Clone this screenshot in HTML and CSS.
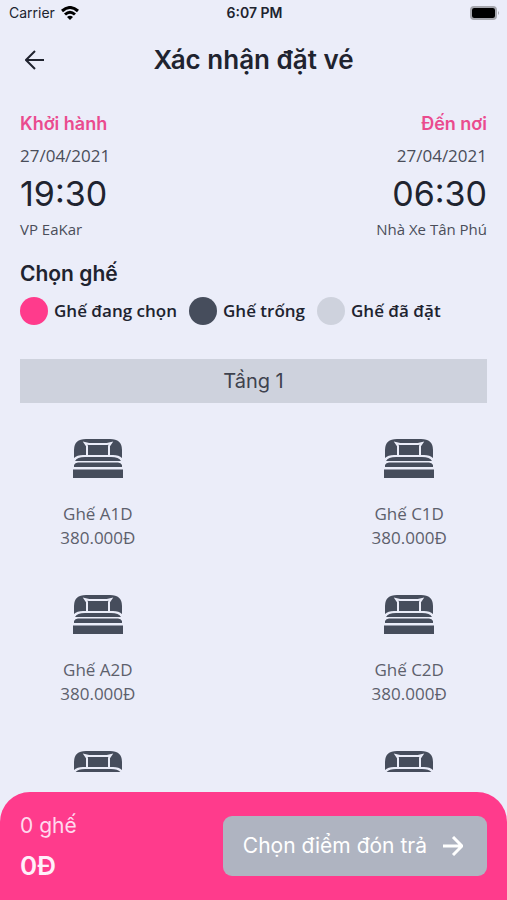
FILE: index.html
```html
<!DOCTYPE html>
<html lang="vi">
<head>
<meta charset="utf-8">
<meta name="viewport" content="width=device-width, initial-scale=1">
<title>Xác nhận đặt vé</title>
<link rel="stylesheet" href="styles.css">
</head>
<body>
<svg class="symbols" aria-hidden="true">
  <symbol id="bed" viewBox="0 0 50 40">
    <path d="M1 20V12Q1 1 13 1H37Q49 1 49 12V20Q46 17 40 17H10Q4 17 1 20Z"/>
    <path class="bed-line" d="M14 18V8L12 5L16 6H34L38 5L36 8V18"/>
    <path d="M2 23Q4 19 12 19H38Q46 19 48 23Z"/>
    <path d="M1 29V27Q2 24.500 5 24.500H45Q48 24.500 49 27V29ZM0 31.500H50V40H0Z"/>
  </symbol>
</svg>
<div class="app">
  <div class="status">
    <div class="carrier">
      <span>Carrier</span>
      <svg class="wifi" viewBox="0 0 18 14" aria-hidden="true"><path d="M1 5Q9-2 17 5M4 8.500Q9 4 14 8.500"/><path class="wifi-dot" d="M6 11Q9 8.500 12 11L9 14Z"/></svg>
    </div>
    <span class="clock">6:07 PM</span>
    <svg class="battery" viewBox="0 0 30 14" aria-hidden="true"><rect class="shell" x="1" y="1" width="25" height="12" rx="3"/><rect x="2" y="2" width="23" height="10" rx="2"/><path class="cap" d="M28 5Q30 7 28 9Z"/></svg>
  </div>
  <header class="header">
    <button class="back" type="button" aria-label="Quay lại"><svg viewBox="0 0 20 20" aria-hidden="true"><path d="M19 10H1M10 1L1 10L10 19"/></svg></button>
    <h1>Xác nhận đặt vé</h1>
  </header>
  <main class="content">
    <section class="trip">
      <div class="stop">
        <h2>Khởi hành</h2>
        <p class="date">27/04/2021</p>
        <p class="time">19:30</p>
        <p class="place">VP EaKar</p>
      </div>
      <div class="stop arrival">
        <h2>Đến nơi</h2>
        <p class="date">27/04/2021</p>
        <p class="time">06:30</p>
        <p class="place">Nhà Xe Tân Phú</p>
      </div>
    </section>
    <h2 class="choose">Chọn ghế</h2>
    <ul class="legend">
      <li><span class="dot selected"></span>Ghế đang chọn</li>
      <li><span class="dot free"></span>Ghế trống</li>
      <li><span class="dot taken"></span>Ghế đã đặt</li>
    </ul>
    <h3 class="floor">Tầng 1</h3>
    <div class="seats">
      <button class="seat" type="button"><svg class="bed"><use href="#bed"/></svg><span>Ghế A1D</span><span>380.000Đ</span></button>
      <button class="seat right" type="button"><svg class="bed"><use href="#bed"/></svg><span>Ghế C1D</span><span>380.000Đ</span></button>
      <button class="seat" type="button"><svg class="bed"><use href="#bed"/></svg><span>Ghế A2D</span><span>380.000Đ</span></button>
      <button class="seat right" type="button"><svg class="bed"><use href="#bed"/></svg><span>Ghế C2D</span><span>380.000Đ</span></button>
      <button class="seat" type="button" aria-label="Ghế"><svg class="bed"><use href="#bed"/></svg></button>
      <button class="seat right" type="button" aria-label="Ghế"><svg class="bed"><use href="#bed"/></svg></button>
    </div>
  </main>
  <footer class="summary">
    <div class="total">
      <span class="count">0 ghế</span>
      <strong>0Đ</strong>
    </div>
    <button class="next" type="button">Chọn điểm đón trả<svg viewBox="0 0 20 20" aria-hidden="true"><path d="M0 10H18M10 1L19 10L10 19"/></svg></button>
  </footer>
</div>
</body>
</html>
```
FILE: styles.css
```css
* {
  box-sizing: border-box;
}

body,
h1,
h2,
h3,
p,
ul {
  margin: 0;
  padding: 0;
}

body {
  background: #ebedf9;
  color: #20232f;
  font-family: "Open Sans", "Noto Sans", sans-serif;
}

button {
  border: 0;
  padding: 0;
  background: none;
  color: inherit;
  font: inherit;
  cursor: pointer;
}

.symbols {
  position: absolute;
  width: 0;
  height: 0;
}

.app {
  display: flex;
  flex-direction: column;
  height: 100vh;
}

.status {
  display: grid;
  grid-template-columns: 1fr auto 1fr;
  align-items: center;
  height: 26px;
  padding: 0 7px 0 9px;
  font: 14px/20px Inter, sans-serif;
}

.carrier {
  display: flex;
  align-items: center;
  gap: 6px;
}

.wifi {
  width: 18px;
  height: 14px;
  fill: none;
  stroke: #000;
  stroke-width: 3;
}

.wifi-dot {
  fill: #000;
  stroke: none;
}

.clock {
  font-weight: 600;
}

.battery {
  justify-self: end;
  width: 30px;
  height: 14px;
}

.shell {
  fill: none;
  stroke: #a5a6ad;
  stroke-width: 2;
}

.cap {
  fill: #a5a6ad;
}

.header {
  display: grid;
  grid-template-columns: 30px 1fr 30px;
  align-items: center;
  height: 68px;
  padding: 0 20px;
}

.header h1 {
  font: 600 26px/32px Inter, sans-serif;
  text-align: center;
}

.back {
  display: flex;
  justify-content: center;
}

.header svg,
.next svg {
  width: 20px;
  height: 20px;
  fill: none;
  stroke: currentColor;
  stroke-width: 2;
}

.next svg {
  stroke-width: 3;
}

.content {
  flex: 1;
  min-height: 0;
  display: flex;
  flex-direction: column;
  padding: 18px 20px 0;
  margin-bottom: 20px;
}

.trip {
  display: flex;
  justify-content: space-between;
}

.arrival {
  text-align: right;
}

.stop h2 {
  color: #ea4b8e;
  font: 600 18px/24px Inter, sans-serif;
}

.date {
  margin-top: 8px;
  color: #4a4d59;
  font-size: 17px;
  line-height: 24px;
}

.time {
  margin-top: 4px;
  font: 34px/44px Inter, sans-serif;
}

.place {
  margin-top: 3px;
  color: #4a4d59;
  font-size: 15px;
  line-height: 20px;
}

.choose {
  margin-top: 21px;
  font: 600 21px/28px Inter, sans-serif;
}

.legend {
  display: flex;
  gap: 12px;
  margin-top: 9px;
  list-style: none;
  font-size: 17px;
  font-weight: 600;
  line-height: 28px;
  white-space: nowrap;
}

.legend li {
  display: flex;
  align-items: center;
  gap: 6px;
}

.dot {
  width: 28px;
  height: 28px;
  border-radius: 50%;
}

.selected {
  background: #ff3b8c;
}

.free {
  background: #464d5c;
}

.taken {
  background: #ced2dd;
}

.floor {
  margin-top: 34px;
  padding: 8px;
  background: #ced2dd;
  color: #3e424e;
  font: 20px/28px Inter, sans-serif;
  text-align: center;
}

.seats {
  flex: 1;
  min-height: 0;
  overflow-y: auto;
  scrollbar-width: none;
  display: grid;
  grid-template-columns: repeat(3, 1fr);
  grid-auto-rows: 156px;
  padding-top: 35px;
}

.seat {
  display: flex;
  flex-direction: column;
  align-items: center;
  grid-column: 1;
  color: #5d606c;
  font-size: 17px;
  line-height: 24px;
}

.right {
  grid-column: 3;
}

.bed {
  width: 50px;
  height: 40px;
  margin-bottom: 24px;
  fill: #464d5c;
}

.bed-line {
  fill: none;
  stroke: #ebedf9;
  stroke-width: 2;
}

.summary {
  display: flex;
  justify-content: space-between;
  align-items: flex-start;
  padding: 20px 20px 18px;
  border-radius: 30px 30px 0 0;
  background: #ff3b8c;
  color: #fff;
  font-family: Inter, sans-serif;
}

.total {
  display: flex;
  flex-direction: column;
  gap: 10px;
}

.count {
  color: #ffd9ee;
  font-size: 21px;
  line-height: 28px;
}

.total strong {
  color: #fff0fa;
  font-size: 26px;
  font-weight: 600;
  line-height: 32px;
}

.next {
  display: flex;
  align-items: center;
  gap: 16px;
  margin-top: 4px;
  padding: 16px 24px 16px 20px;
  border-radius: 9px;
  background: #afb4c1;
  font-size: 21px;
  line-height: 28px;
}
```
